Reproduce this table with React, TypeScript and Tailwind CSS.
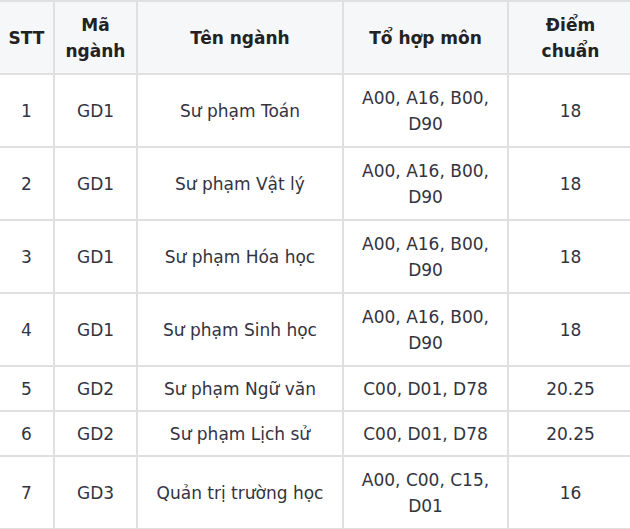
const rows = [
  { stt: 1, ma: "GD1", ten: "Sư phạm Toán", to: ["A00, A16, B00,", "D90"], diem: "18" },
  { stt: 2, ma: "GD1", ten: "Sư phạm Vật lý", to: ["A00, A16, B00,", "D90"], diem: "18" },
  { stt: 3, ma: "GD1", ten: "Sư phạm Hóa học", to: ["A00, A16, B00,", "D90"], diem: "18" },
  { stt: 4, ma: "GD1", ten: "Sư phạm Sinh học", to: ["A00, A16, B00,", "D90"], diem: "18" },
  { stt: 5, ma: "GD2", ten: "Sư phạm Ngữ văn", to: ["C00, D01, D78"], diem: "20.25" },
  { stt: 6, ma: "GD2", ten: "Sư phạm Lịch sử", to: ["C00, D01, D78"], diem: "20.25" },
  { stt: 7, ma: "GD3", ten: "Quản trị trường học", to: ["A00, C00, C15,", "D01"], diem: "16" },
];

const cell = "border-2 border-[#e0e0e0] text-center align-middle px-0";

export default function App() {
  return (
    <div className="w-[630px] h-[529px] overflow-hidden bg-white">
      <table
        className="table-fixed border-collapse w-[634px] -ml-[2px] text-[17px] leading-[26px] text-[#333340]"
        style={{ fontFamily: '"DejaVu Sans", Verdana, sans-serif' }}
      >
        <colgroup>
          <col className="w-[55px]" />
          <col className="w-[83px]" />
          <col className="w-[206px]" />
          <col className="w-[165px]" />
          <col className="w-[125px]" />
        </colgroup>
        <thead>
          <tr className="h-[73px] bg-[#f5f7f9] font-bold text-[#222]">
            <th className={cell}>STT</th>
            <th className={cell}>
              Mã
              <br />
              ngành
            </th>
            <th className={cell}>Tên ngành</th>
            <th className={cell}>Tổ hợp môn</th>
            <th className={cell}>
              Điểm
              <br />
              chuẩn
            </th>
          </tr>
        </thead>
        <tbody>
          {rows.map((r) => (
            <tr key={r.stt} className={r.to.length > 1 ? "h-[73px]" : "h-[45px]"}>
              <td className={cell}>{r.stt}</td>
              <td className={cell}>{r.ma}</td>
              <td className={cell}>{r.ten}</td>
              <td className={cell}>
                {r.to.map((t, i) => (
                  <div key={i}>{t}</div>
                ))}
              </td>
              <td className={cell}>{r.diem}</td>
            </tr>
          ))}
        </tbody>
      </table>
    </div>
  );
}
